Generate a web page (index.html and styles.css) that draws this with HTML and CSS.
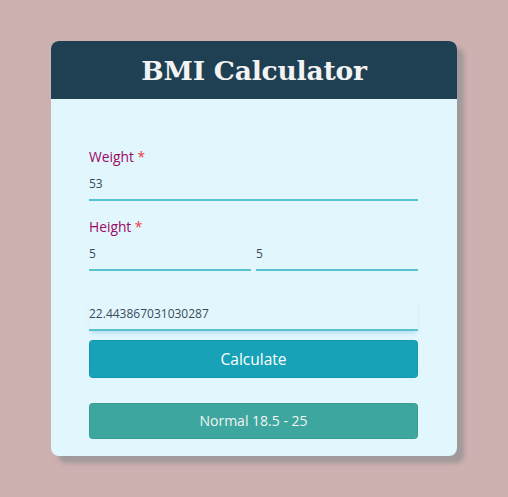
FILE: index.html
```html
<!DOCTYPE html>
<html>
<head>
<meta charset="utf-8">
<link rel="stylesheet" href="styles.css">
</head>
<body>
<div class="card">
  <div class="card-header"><h1 class="title">BMI Calculator</h1></div>
  <div class="card-body">
    <div class="field">
      <label class="label">Weight <span class="req">*</span></label>
      <div class="input">53</div>
    </div>
    <div class="field">
      <label class="label">Height <span class="req">*</span></label>
      <div class="row">
        <div class="input">5</div>
        <div class="input">5</div>
      </div>
    </div>
    <div class="input result">22.443867031030287</div>
    <button class="btn calc">Calculate</button>
    <div class="btn status">Normal 18.5 - 25</div>
  </div>
</div>
</body>
</html>
```
FILE: styles.css
```css
html, body { margin: 0; padding: 0; }
body {
  background: #cdb0b0;
  width: 508px;
  height: 497px;
  font-family: "Open Sans", "Noto Sans", sans-serif;
  padding-top: 41px;
  box-sizing: border-box;
}
.card {
  width: 406px;
  margin: 0 auto;
  border-radius: 8px;
  overflow: hidden;
  background: #e2f6fe;
  box-shadow: 7px 7px 4px rgba(125, 135, 135, 0.55);
}
.card-header {
  background: #1f3f52;
  height: 58px;
  display: flex;
  align-items: center;
  justify-content: center;
}
.title {
  margin: 0;
  color: #f3f3f3;
  font-family: "DejaVu Serif", serif;
  font-weight: bold;
  font-size: 26.5px;
  letter-spacing: -0.2px;
}
.card-body {
  padding: 49px 39px 17px 38px;
}
.label {
  display: block;
  color: #9c0b63;
  font-size: 13.8px;
  line-height: 18px;
}
.req { color: #f0383f; }
.input {
  font-size: 12px;
  color: #3b4a5a;
  line-height: 18px;
  padding: 9px 0 6px;
  border-bottom: 2px solid #5ac3d0;
}
.field + .field { margin-top: 17px; }
.row {
  display: flex;
  gap: 5px;
}
.row .input { flex: 1; }
.result {
  margin-top: 25px;
  box-shadow: 0 4px 4px -2px rgba(90, 180, 200, 0.35);
}
.btn {
  display: block;
  width: 100%;
  box-sizing: border-box;
  border: 1px solid rgba(0,0,0,0.05);
  border-radius: 4px;
  color: #ffffff;
  text-align: center;
  font-family: "Open Sans", "Noto Sans", sans-serif;
  padding: 0;
}
.calc {
  margin-top: 9px;
  height: 38px;
  background: #17a2b8;
  font-size: 15.5px;
}
.status {
  margin-top: 25px;
  height: 36px;
  line-height: 34px;
  background: #3da69e;
  font-size: 14px;
  color: #f4f4f4;
}
```
